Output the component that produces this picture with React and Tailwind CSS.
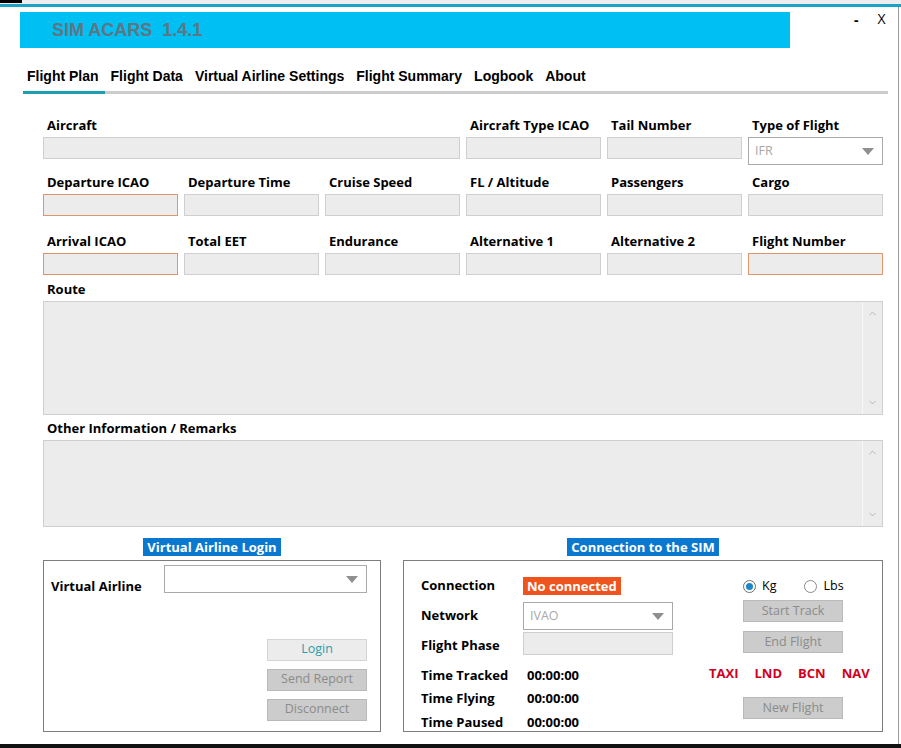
import { ChevronDown, ChevronUp } from "lucide-react";

const font = { fontFamily: '"Open Sans", "Noto Sans", sans-serif' };
const narrow = {
  fontFamily: '"Liberation Sans Narrow", "Arial Narrow", "Liberation Sans", sans-serif',
};

const Caret = () => (
  <svg width="12" height="7" viewBox="0 0 12 7" className="shrink-0">
    <path d="M0 0 L12 0 L6 7 Z" fill="#8f8f8f" />
  </svg>
);

function Field({ label, span = "", warn = false }) {
  return (
    <div className={span}>
      <div className="h-[20px] pl-1 text-[13px] font-bold leading-[20px] text-black">
        {label}
      </div>
      <div
        className={`mt-[2px] h-[22px] border bg-[#ececec] ${
          warn ? "border-[#e3946a]" : "border-[#cfcfcf]"
        }`}
      />
    </div>
  );
}

function TextBox({ height }) {
  return (
    <div className={`flex ${height} border border-[#cfcfcf] bg-[#ececec]`}>
      <div className="flex-1" />
      <div className="flex w-[20px] flex-col items-center justify-between border-l border-[#f7f7f7] py-[6px] text-[#b0b0b0]">
        <ChevronUp size={11} strokeWidth={2} />
        <ChevronDown size={11} strokeWidth={2} />
      </div>
    </div>
  );
}

function GrayButton({ children, light = false }) {
  return (
    <div
      className={`flex h-[22px] w-[100px] items-center justify-center border text-[12.5px] ${
        light
          ? "border-[#d4d4d4] bg-[#ececec] text-[#2a9cab]"
          : "border-[#b9b9b9] bg-[#cccccc] text-[#8b8b8b]"
      }`}
    >
      {children}
    </div>
  );
}

export default function App() {
  const tabs = [
    "Flight Plan",
    "Flight Data",
    "Virtual Airline Settings",
    "Flight Summary",
    "Logbook",
    "About",
  ];

  return (
    <div
      className="relative h-[748px] w-[901px] overflow-hidden bg-white"
      style={font}
    >
      {/* desktop behind the window */}
      <div className="flex h-[4px] bg-[#eeeeee]">
        <div className="h-[3px] w-[22px] bg-black" />
      </div>
      <div className="h-[3px] bg-[#1aa3c6]" />

      <div className="h-[737px] w-[899px] border-r border-[#9a9a9a]">
        {/* header */}
        <div className="flex pt-[5px]">
          <div className="ml-[20px] flex h-[36px] w-[770px] items-center bg-[#00bff3] pl-[32px]">
            <span
              className="whitespace-pre text-[18px] font-bold text-[#5f7583]"
              style={narrow}
            >
              SIM ACARS  1.4.1
            </span>
          </div>
          <div className="ml-[64px] flex gap-[19px] text-[14px] text-black">
            <span className="pt-[1px] font-bold leading-[14px]">-</span>
            <span className="leading-[14px]">X</span>
          </div>
        </div>

        {/* tabs */}
        <div className="ml-[23px] mt-[17px] w-[865px]">
          <div
            className="flex h-[22px] items-center gap-[12px] pl-[4px] text-[14px] font-bold text-black"
            style={narrow}
          >
            {tabs.map((t) => (
              <span key={t}>{t}</span>
            ))}
          </div>
          <div className="mt-[4px] flex h-[3px] bg-[#cccccc]">
            <div className="w-[82px] bg-[#1a9fb0]" />
          </div>
        </div>

        {/* flight plan form */}
        <div className="ml-[43px] mt-[21px] w-[840px]">
          <div className="grid grid-cols-6 gap-x-[6px]">
            <Field label="Aircraft" span="col-span-3" />
            <Field label="Aircraft Type ICAO" />
            <Field label="Tail Number" />
            <div>
              <div className="h-[20px] pl-1 text-[13px] font-bold leading-[20px]">
                Type of Flight
              </div>
              <div className="mb-[-6px] mt-[2px] flex h-[28px] items-center justify-between border border-[#aaaaaa] bg-white pl-[6px] pr-[8px] text-[12.5px] text-[#a8a8a8]">
                IFR
                <Caret />
              </div>
            </div>
          </div>

          <div className="mt-[13px] grid grid-cols-6 gap-x-[6px]">
            <Field label="Departure ICAO" warn />
            <Field label="Departure Time" />
            <Field label="Cruise Speed" />
            <Field label="FL / Altitude" />
            <Field label="Passengers" />
            <Field label="Cargo" />
          </div>

          <div className="mt-[15px] grid grid-cols-6 gap-x-[6px]">
            <Field label="Arrival ICAO" warn />
            <Field label="Total EET" />
            <Field label="Endurance" />
            <Field label="Alternative 1" />
            <Field label="Alternative 2" />
            <Field label="Flight Number" warn />
          </div>

          <div className="mt-[4px] h-[20px] pl-1 text-[13px] font-bold leading-[20px]">
            Route
          </div>
          <div className="mt-[2px]">
            <TextBox height="h-[114px]" />
          </div>

          <div className="mt-[3px] h-[20px] pl-1 text-[13px] font-bold leading-[20px]">
            Other Information / Remarks
          </div>
          <div className="mt-[2px]">
            <TextBox height="h-[87px]" />
          </div>

          {/* bottom panels */}
          <div className="mt-[11px] flex gap-[22px]">
            {/* virtual airline login */}
            <div className="w-[338px]">
              <div className="flex justify-center">
                <span className="h-[18px] bg-[#0b78d0] px-[4px] text-[13px] font-bold leading-[18px] text-white">
                  Virtual Airline Login
                </span>
              </div>
              <div className="mt-[4px] h-[172px] border border-[#7d7d7d] pr-[13px]">
                <div className="mt-[4px] flex items-start">
                  <span className="w-[120px] pl-[7px] pt-[12px] text-[13px] font-bold">
                    Virtual Airline
                  </span>
                  <div className="flex h-[28px] w-[204px] items-center justify-end border border-[#aaaaaa] bg-white pr-[8px]">
                    <Caret />
                  </div>
                </div>
                <div className="mt-[42px] flex flex-col items-end gap-[8px]">
                  <GrayButton light>Login</GrayButton>
                  <GrayButton>Send Report</GrayButton>
                  <GrayButton>Disconnect</GrayButton>
                </div>
              </div>
            </div>

            {/* connection to the sim */}
            <div className="w-[480px]">
              <div className="flex justify-center">
                <span className="h-[18px] bg-[#0b78d0] px-[4px] text-[13px] font-bold leading-[18px] text-white">
                  Connection to the SIM
                </span>
              </div>
              <div className="mt-[4px] flex h-[172px] border border-[#7d7d7d] pl-[17px]">
                <div className="w-[252px] pt-[14px] text-[13px] font-bold">
                  <div className="flex h-[22px] items-center">
                    <span className="w-[102px]">Connection</span>
                    <span className="h-[18px] bg-[#f0541e] px-[4px] text-[13px] leading-[18px] text-white">
                      No connected
                    </span>
                  </div>
                  <div className="mt-[5px] flex items-center">
                    <span className="w-[102px]">Network</span>
                    <div className="flex h-[28px] w-[150px] items-center justify-between border border-[#aaaaaa] bg-white pl-[6px] pr-[8px] text-[12.5px] font-normal text-[#a8a8a8]">
                      IVAO
                      <Caret />
                    </div>
                  </div>
                  <div className="mt-[2px] flex items-center">
                    <span className="w-[102px] pt-[4px]">Flight Phase</span>
                    <div className="h-[23px] w-[150px] border border-[#cfcfcf] bg-[#ececec]" />
                  </div>
                  <div className="mt-[9px] flex h-[22px] items-center">
                    <span className="w-[106px]">Time Tracked</span>
                    <span>00:00:00</span>
                  </div>
                  <div className="mt-[1px] flex h-[22px] items-center">
                    <span className="w-[106px]">Time Flying</span>
                    <span>00:00:00</span>
                  </div>
                  <div className="mt-[2px] flex h-[22px] items-center">
                    <span className="w-[106px]">Time Paused</span>
                    <span>00:00:00</span>
                  </div>
                </div>

                <div className="ml-[36px] pt-[15px]">
                  <div className="ml-[34px] flex h-[20px] items-center text-[12.5px]">
                    <span className="flex h-[13px] w-[13px] items-center justify-center rounded-full border border-[#6f6f6f] bg-white">
                      <span className="h-[7px] w-[7px] rounded-full bg-[#1b87c9]" />
                    </span>
                    <span className="ml-[6px]">Kg</span>
                    <span className="ml-[28px] h-[13px] w-[13px] rounded-full border border-[#8a8a8a] bg-white" />
                    <span className="ml-[6px]">Lbs</span>
                  </div>
                  <div className="ml-[34px] mt-[4px]">
                    <GrayButton>Start Track</GrayButton>
                  </div>
                  <div className="ml-[34px] mt-[9px]">
                    <GrayButton>End Flight</GrayButton>
                  </div>
                  <div className="mt-[12px] flex h-[18px] items-center gap-[16px] text-[13px] font-bold text-[#d3001c]">
                    <span>TAXI</span>
                    <span>LND</span>
                    <span>BCN</span>
                    <span>NAV</span>
                  </div>
                  <div className="ml-[34px] mt-[14px]">
                    <GrayButton>New Flight</GrayButton>
                  </div>
                </div>
              </div>
            </div>
          </div>
        </div>
      </div>

      {/* taskbar strip at the bottom */}
      <div className="h-[4px] bg-[#111111]" />
    </div>
  );
}
